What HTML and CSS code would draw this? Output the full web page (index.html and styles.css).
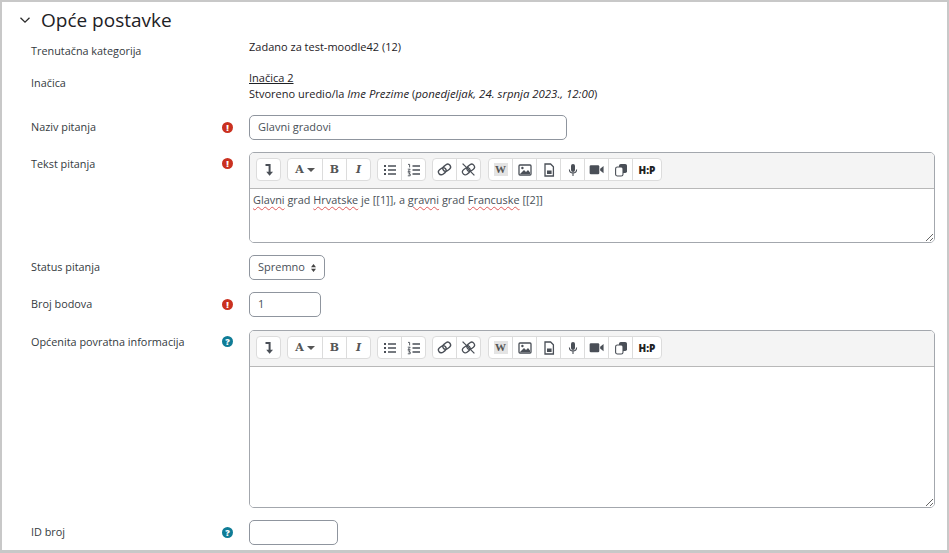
FILE: index.html
```html
<!doctype html>
<html>
<head>
    <meta charset="utf-8">
    <title>Opće postavke</title>
    <meta name="viewport" content="width=device-width, initial-scale=1.0">
    <link rel="stylesheet" href="styles.css">
</head>
<body>

    <!-- icons used by both editor toolbars -->
    <svg class="defs" width="0" height="0">
        <symbol id="i-collapse" viewBox="0 0 14 14">
            <path d="M3.5 2H7.6V10" fill="none" stroke="currentColor" stroke-width="2"/>
            <path d="M4.2 8.8H11L7.6 12.8Z" fill="currentColor"/>
        </symbol>
        <symbol id="i-ul" viewBox="0 0 14 14">
            <path d="M5 3H13M5 7H13M5 11H13" stroke="currentColor" stroke-width="1.4"/>
            <path d="M1 2H3V4H1ZM1 6H3V8H1ZM1 10H3V12H1Z" fill="currentColor"/>
        </symbol>
        <symbol id="i-ol" viewBox="0 0 14 14">
            <path d="M5.5 3H13M5.5 7H13M5.5 11H13" stroke="currentColor" stroke-width="1.4"/>
            <path d="M1 1.4H2.6V4.4M.8 6.2H3.2L1 8.4H3.4M.8 9.8H3.2L1.8 11H3.2V12.8H.8" fill="none" stroke="currentColor" stroke-width=".9"/>
        </symbol>
        <symbol id="i-link" viewBox="0 0 14 14">
            <g fill="none" stroke="currentColor" stroke-width="1.3" transform="rotate(-38 7 7)">
                <rect x=".6" y="4.4" width="7.6" height="5.2" rx="2.6"/>
                <rect x="5.8" y="4.4" width="7.6" height="5.2" rx="2.6"/>
            </g>
        </symbol>
        <symbol id="i-unlink" viewBox="0 0 14 14">
            <g fill="none" stroke="currentColor" stroke-width="1.2">
                <rect x=".6" y="4.4" width="7.6" height="5.2" rx="2.6" transform="rotate(-38 7 7)"/>
                <rect x="5.8" y="4.4" width="7.6" height="5.2" rx="2.6" transform="rotate(-38 7 7)"/>
                <path d="M1.5 1.5L12.5 12.5"/>
            </g>
        </symbol>
        <symbol id="i-image" viewBox="0 0 14 14">
            <rect x="1" y="2" width="12" height="10" rx="1" fill="none" stroke="currentColor" stroke-width="1.3"/>
            <circle cx="4.4" cy="5" r="1.2" fill="currentColor"/>
            <path d="M2 11L6 7L8 9L10 7L12 9.5V11Z" fill="currentColor"/>
        </symbol>
        <symbol id="i-file" viewBox="0 0 14 14">
            <path d="M3 1H8.6L11.4 3.8V13H3Z" fill="none" stroke="currentColor" stroke-width="1.3"/>
            <path d="M5 7.4H9.6V11H5Z" fill="currentColor"/>
        </symbol>
        <symbol id="i-mic" viewBox="0 0 14 14">
            <rect x="5" y="1" width="4" height="8" rx="2" fill="currentColor"/>
            <path d="M3.4 6.4C3.4 11 10.6 11 10.6 6.4M7 10V13" fill="none" stroke="currentColor" stroke-width="1.1"/>
        </symbol>
        <symbol id="i-video" viewBox="0 0 14 14">
            <rect x=".6" y="3" width="9" height="8.4" rx="1.2" fill="currentColor"/>
            <path d="M10.4 6.4L13.6 3.8V10.6L10.4 8Z" fill="currentColor"/>
        </symbol>
        <symbol id="i-copy" viewBox="0 0 14 14">
            <rect x="5" y="1" width="8" height="9" rx="1.8" fill="currentColor"/>
            <rect x="1.6" y="4" width="7.4" height="9" rx="1.8" fill="#fff" stroke="currentColor" stroke-width="1.1"/>
        </symbol>
    </svg>

    <div class="frame">
        <div class="section-head">
            <svg class="chevron" width="12" height="12" viewBox="0 0 12 12">
                <path d="M1.5 3.8L6 8.2L10.5 3.8" fill="none" stroke="#2b2b2b" stroke-width="1.3"/>
            </svg>
            <h3>Opće postavke</h3>
        </div>

        <div class="row">
            <div class="label">Trenutačna kategorija</div>
            <div class="mark"></div>
            <div class="value">Zadano za test-moodle42 (12)</div>
        </div>

        <div class="row">
            <div class="label">Inačica</div>
            <div class="mark"></div>
            <div class="value value-stack">
                <a href="#">Inačica 2</a><br>
                Stvoreno uredio/la <em>Ime Prezime</em> (<em>ponedjeljak, 24. srpnja 2023., 12:00</em>)
            </div>
        </div>

        <div class="row">
            <div class="label label-mid">Naziv pitanja</div>
            <div class="mark mark-mid"><span class="badge badge-req">!</span></div>
            <div><input class="field field-name" type="text" value="Glavni gradovi"></div>
        </div>

        <div class="row">
            <div class="label">Tekst pitanja</div>
            <div class="mark"><span class="badge badge-req">!</span></div>
            <div class="editor">
                <div class="toolbar">
                    <div class="group">
                        <button class="tool"><svg width="14" height="14"><use href="#i-collapse"/></svg></button>
                    </div>
                    <div class="group">
                        <button class="tool tool-wide"><span class="glyph">A</span><span class="caret"></span></button>
                        <button class="tool"><span class="glyph">B</span></button>
                        <button class="tool"><span class="glyph glyph-i">I</span></button>
                    </div>
                    <div class="group">
                        <button class="tool"><svg width="14" height="14"><use href="#i-ul"/></svg></button>
                        <button class="tool"><svg width="14" height="14"><use href="#i-ol"/></svg></button>
                    </div>
                    <div class="group group-link">
                        <button class="tool"><svg width="15" height="15"><use href="#i-link"/></svg></button>
                        <button class="tool"><svg width="15" height="15"><use href="#i-unlink"/></svg></button>
                    </div>
                    <div class="group">
                        <button class="tool"><span class="word">W</span></button>
                        <button class="tool"><svg width="14" height="14"><use href="#i-image"/></svg></button>
                        <button class="tool"><svg width="14" height="14"><use href="#i-file"/></svg></button>
                        <button class="tool"><svg width="14" height="14"><use href="#i-mic"/></svg></button>
                        <button class="tool"><svg width="15" height="15"><use href="#i-video"/></svg></button>
                        <button class="tool"><svg width="14" height="14"><use href="#i-copy"/></svg></button>
                        <button class="tool tool-h5p">H:P</button>
                    </div>
                </div>
                <div class="content content-short"><span class="typo">Glavni</span> grad <span class="typo">Hrvatske</span> je [[1]], a <span class="typo">gravni</span> grad <span class="typo">Francuske</span> [[2]]</div>
            </div>
        </div>

        <div class="row">
            <div class="label label-mid">Status pitanja</div>
            <div class="mark"></div>
            <div>
                <select class="field field-select">
                    <option>Spremno</option>
                </select>
            </div>
        </div>

        <div class="row row-before-editor">
            <div class="label label-mid">Broj bodova</div>
            <div class="mark mark-mid"><span class="badge badge-req">!</span></div>
            <div><input class="field field-mark" type="text" value="1"></div>
        </div>

        <div class="row">
            <div class="label">Općenita povratna informacija</div>
            <div class="mark"><span class="badge badge-help">?</span></div>
            <div class="editor">
                <div class="toolbar">
                    <div class="group">
                        <button class="tool"><svg width="14" height="14"><use href="#i-collapse"/></svg></button>
                    </div>
                    <div class="group">
                        <button class="tool tool-wide"><span class="glyph">A</span><span class="caret"></span></button>
                        <button class="tool"><span class="glyph">B</span></button>
                        <button class="tool"><span class="glyph glyph-i">I</span></button>
                    </div>
                    <div class="group">
                        <button class="tool"><svg width="14" height="14"><use href="#i-ul"/></svg></button>
                        <button class="tool"><svg width="14" height="14"><use href="#i-ol"/></svg></button>
                    </div>
                    <div class="group group-link">
                        <button class="tool"><svg width="15" height="15"><use href="#i-link"/></svg></button>
                        <button class="tool"><svg width="15" height="15"><use href="#i-unlink"/></svg></button>
                    </div>
                    <div class="group">
                        <button class="tool"><span class="word">W</span></button>
                        <button class="tool"><svg width="14" height="14"><use href="#i-image"/></svg></button>
                        <button class="tool"><svg width="14" height="14"><use href="#i-file"/></svg></button>
                        <button class="tool"><svg width="14" height="14"><use href="#i-mic"/></svg></button>
                        <button class="tool"><svg width="15" height="15"><use href="#i-video"/></svg></button>
                        <button class="tool"><svg width="14" height="14"><use href="#i-copy"/></svg></button>
                        <button class="tool tool-h5p">H:P</button>
                    </div>
                </div>
                <div class="content content-tall"></div>
            </div>
        </div>

        <div class="row">
            <div class="label label-mid">ID broj</div>
            <div class="mark mark-mid"><span class="badge badge-help">?</span></div>
            <div><input class="field field-id" type="text"></div>
        </div>
    </div>

</body>
</html>
```

FILE: styles.css
```css
* {
    box-sizing: border-box;
}
body {
    margin: 0;
    font-family: 'Open Sans', sans-serif;
    font-size: 11px;
    line-height: 16px;
    color: #1d2125;
    background-color: #fff;
}
.defs {
    position: absolute;
}
.frame {
    width: 949px;
    height: 553px;
    padding: 0 12px 0 29px;
    border: 2px solid #c8c8c8;
    border-bottom-width: 3px;
    overflow: hidden;
}
.section-head {
    display: flex;
    align-items: center;
    height: 37px;
    padding-bottom: 1px;
    margin-left: -12px;
}
.chevron {
    margin-right: 10px;
}
.section-head h3 {
    margin: 0;
    font-size: 19px;
    font-weight: 400;
    line-height: 24px;
    color: #1d2125;
}
.row {
    display: grid;
    grid-template-columns: 191px 27px 1fr;
    margin-bottom: 12px;
}
.row-before-editor {
    margin-bottom: 13px;
}
.label {
    padding-top: 4px;
    font-size: 10.85px;
    color: #343a40;
}
.label-mid {
    padding: 0 0 2px;
    align-self: center;
}
.mark {
    padding-top: 6px;
}
.mark-mid {
    padding-top: 0;
    align-self: center;
}
.badge {
    display: flex;
    align-items: center;
    justify-content: center;
    width: 11px;
    height: 11px;
    border-radius: 50%;
    color: #fff;
    font-size: 9px;
    font-weight: 800;
    line-height: 11px;
}
.badge-req {
    background-color: #ca3120;
}
.badge-help {
    background-color: #0f7c96;
}
.value a {
    color: #1d2125;
}
.value em {
    font-size: 11.4px;
}
.value-stack {
    margin: -1px 0 1px;
}
.field {
    display: block;
    height: 25px;
    padding: 0 8px 2px;
    font-family: inherit;
    font-size: 11px;
    color: #495057;
    background-color: #fff;
    border: 1px solid #8f959e;
    border-radius: 5px;
}
.field-name {
    width: 318px;
}
.field-select {
    width: 76px;
    appearance: none;
    background-image: url("data:image/svg+xml,%3Csvg xmlns='http://www.w3.org/2000/svg' width='5' height='8'%3E%3Cpath d='M0 3.2L2.5 0L5 3.2ZM0 4.8L2.5 8L5 4.8Z' fill='%23444'/%3E%3C/svg%3E");
    background-repeat: no-repeat;
    background-position: right 8px center;
}
.field-mark {
    width: 72px;
}
.field-id {
    width: 89px;
}
.editor {
    border: 1px solid #a3a7ad;
    border-radius: 5px;
    overflow: hidden;
}
.toolbar {
    display: flex;
    gap: 6px;
    height: 36px;
    padding: 5px 6px 0;
    background-color: #f4f4f4;
    border-bottom: 1px solid #b8b8b8;
}
.group {
    display: flex;
    height: 23px;
    background-color: #fff;
    border: 1px solid #dcdcdc;
    border-radius: 4px;
}
.group-link {
    margin-right: 1px;
}
.tool {
    display: flex;
    align-items: center;
    justify-content: center;
    width: 24px;
    height: 21px;
    padding: 0;
    color: #4a4f57;
    background: none;
    border: none;
    border-left: 1px solid #dcdcdc;
    cursor: pointer;
}
.tool:first-child {
    width: 23px;
    border-left: none;
}
.tool.tool-wide {
    width: 34px;
}
.tool-h5p {
    width: 29px;
    font-family: 'Open Sans', sans-serif;
    font-size: 10px;
    font-weight: 800;
    color: #222;
}
.glyph {
    font-family: 'DejaVu Serif', serif;
    font-size: 11px;
    font-weight: 700;
    color: #555;
}
.glyph-i {
    font-style: italic;
}
.caret {
    width: 0;
    height: 0;
    margin-left: 3px;
    border-top: 4px solid #555;
    border-left: 4px solid transparent;
    border-right: 4px solid transparent;
}
.word {
    width: 14px;
    height: 13px;
    font-family: 'Liberation Serif', serif;
    font-size: 11px;
    font-weight: 700;
    line-height: 13px;
    color: #555;
    background-color: #e4e4e4;
}
.content {
    padding: 2px 3px;
    font-size: 10.9px;
    line-height: 17px;
    color: #495057;
    background-color: #fff;
    resize: vertical;
    overflow: auto;
}
.content-short {
    height: 53px;
}
.content-tall {
    height: 140px;
}
.typo {
    text-decoration: underline wavy #e05a5a 1px;
    text-underline-offset: 2px;
}

@media (max-width: 600px) {
    .row {
        grid-template-columns: 1fr;
    }
}
```
